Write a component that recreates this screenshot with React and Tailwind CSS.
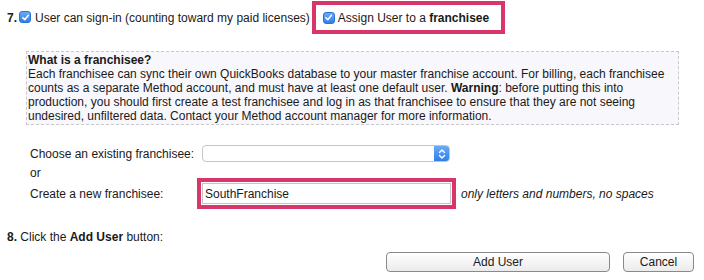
import React from "react";

function Check() {
  return (
    <span className="inline-flex items-center justify-center w-[12px] h-[12px] rounded-[3px] bg-linear-to-b from-[#6aa9f7] to-[#2f7fe8] border border-[#2a73d6] shrink-0">
      <svg width="9" height="9" viewBox="0 0 10 10">
        <path d="M2 5.2 L4.2 7.4 L8.2 2.6" fill="none" stroke="white" strokeWidth="1.7" strokeLinecap="round" strokeLinejoin="round" />
      </svg>
    </span>
  );
}

export default function App() {
  return (
    <div className="w-[704px] h-[280px] bg-white font-['Liberation_Sans',Arial,sans-serif] text-[12px] text-[#1a1a1a] overflow-hidden whitespace-nowrap">
      <div className="flex items-center h-[33px] mt-[1px] pl-[7px]">
        <span className="font-bold">7.</span>
        <span className="ml-[2px]"><Check /></span>
        <span className="ml-[4px]">User can sign-in (counting toward my paid licenses)</span>
        <div className="ml-[2px] h-[33px] border-4 border-[#d8356a] flex items-center pl-[7px] pr-[12px]">
          <Check />
          <span className="ml-[3px]">Assign User to a <span className="font-bold">franchisee</span></span>
        </div>
      </div>

      <div className="mt-[17px] ml-[26px] w-[653px] border border-dashed border-[#c8c8cc] bg-[#f7f7fc] px-[1px] pt-[1px] pb-[1px] leading-[14px] whitespace-normal">
        <div className="font-bold">What is a franchisee?</div>
        <div>
          Each franchisee can sync their own QuickBooks database to your master franchise account. For billing, each franchisee counts as a separate Method account, and must have at least one default user. <span className="font-bold">Warning</span>: before putting this into production, you should first create a test franchisee and log in as that franchisee to ensure that they are not seeing undesired, unfiltered data. Contact your Method account manager for more information.
        </div>
      </div>

      <div className="flex items-center h-[17px] mt-[20px] pl-[30px]">
        <span className="w-[172px]">Choose an existing franchisee:</span>
        <div className="w-[248px] h-[17px] flex rounded-[4px] border border-[#c4c4c4] bg-white overflow-hidden">
          <div className="flex-1" />
          <div className="w-[15px] h-full bg-linear-to-b from-[#6aa9f7] to-[#2f7fe8] flex items-center justify-center">
            <svg width="8" height="12" viewBox="0 0 8 12">
              <path d="M1.5 4.5 L4 2 L6.5 4.5 M1.5 7.5 L4 10 L6.5 7.5" fill="none" stroke="white" strokeWidth="1.4" strokeLinecap="round" strokeLinejoin="round" />
            </svg>
          </div>
        </div>
      </div>

      <div className="h-[12px] mt-[4px] pl-[30px] leading-[14px]">or</div>

      <div className="flex items-center pl-[30px]">
        <span className="w-[167px]">Create a new franchisee:</span>
        <div className="w-[259px] h-[31px] border-4 border-[#d8356a] bg-white p-[1px]">
          <div className="h-full border border-[#c4c4c4] flex items-center pl-[2px]">SouthFranchise</div>
        </div>
        <span className="ml-[5px] italic">only letters and numbers, no spaces</span>
      </div>

      <div className="mt-[21px] pl-[7px] leading-[14px]">
        <span className="font-bold">8.</span> Click the <span className="font-bold">Add User</span> button:
      </div>

      <div className="flex justify-end gap-[13px] pr-[10px] mt-[8px]">
        <button className="w-[224px] h-[20px] rounded-[4px] border border-[#8a8a8a] bg-linear-to-b from-white to-[#ebebeb] text-[12px] leading-none">Add User</button>
        <button className="w-[71px] h-[20px] rounded-[4px] border border-[#8a8a8a] bg-linear-to-b from-white to-[#ebebeb] text-[12px] leading-none">Cancel</button>
      </div>
    </div>
  );
}
